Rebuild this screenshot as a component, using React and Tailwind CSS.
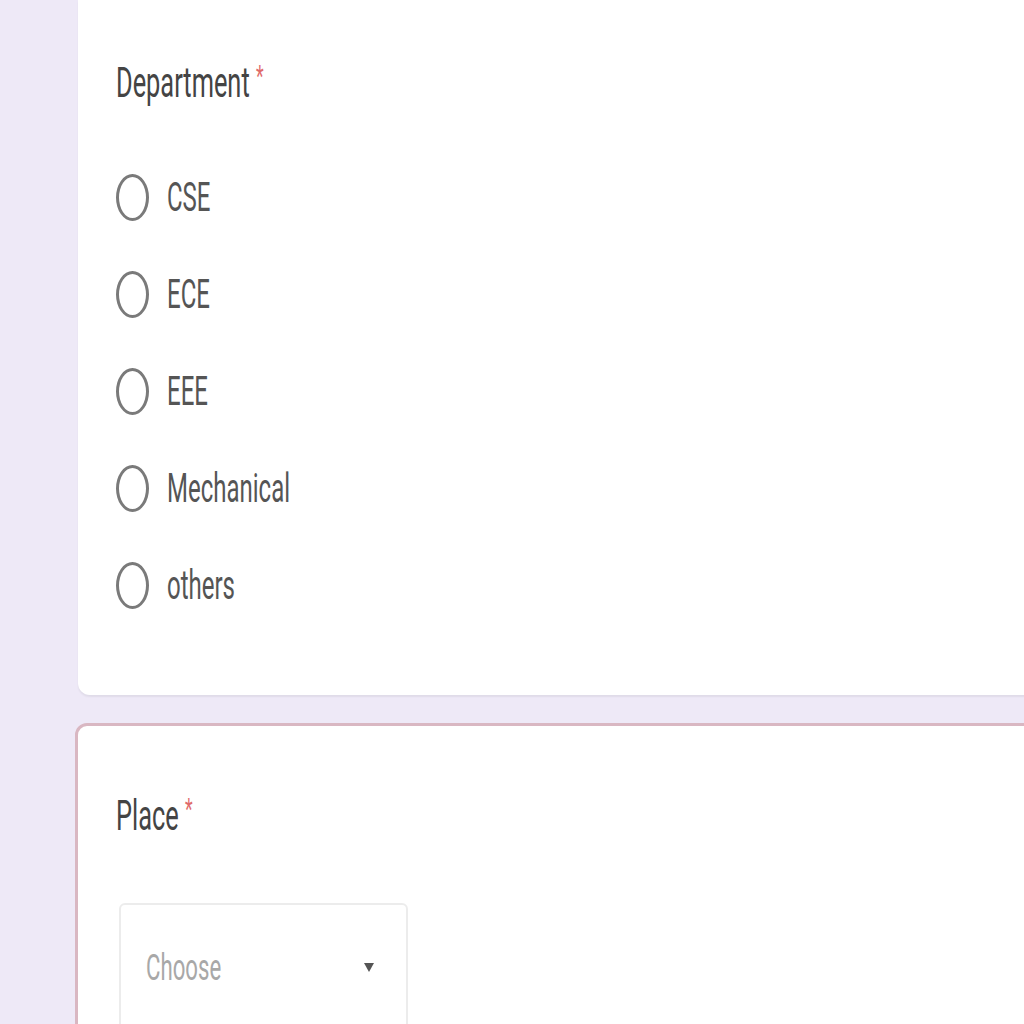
import React from "react";

const options = ["CSE", "ECE", "EEE", "Mechanical", "others"];

function Radio() {
  return <div className="w-[33px] h-[47px] rounded-[50%] border-[3px] border-[#7a7a7a] shrink-0" />;
}

export default function App() {
  return (
    <div
      className="w-[1024px] h-[1024px] overflow-hidden bg-[#eee9f7] flex flex-col"
      style={{ fontFamily: "Roboto, 'Liberation Sans', sans-serif" }}
    >
      <div className="ml-[78px] w-[960px] h-[695px] bg-white rounded-bl-[12px] shadow-[0_2px_2px_rgba(0,0,0,0.06)] pl-[38px] pt-[61px] flex flex-col shrink-0">
        <div className="h-[43px] text-[43px] leading-none text-[#444] whitespace-nowrap">
          <span className="inline-block origin-left scale-x-[0.59]">
            Department <span className="text-[30px] align-top text-[#e06a6a]">*</span>
          </span>
        </div>
        <div className="mt-[45px] flex flex-col">
          {options.map((o) => (
            <div key={o} className="h-[97px] flex items-center">
              <Radio />
              <span className="ml-[18px] text-[40px] leading-none text-[#555] whitespace-nowrap inline-block origin-left scale-x-[0.6]">
                {o}
              </span>
            </div>
          ))}
        </div>
      </div>
      <div className="mt-[28px] ml-[75px] w-[980px] h-[400px] bg-white rounded-tl-[12px] border-[3px] border-[#d9b7c2] pl-[38px] pt-[68px] flex flex-col shrink-0">
        <div className="h-[43px] text-[43px] leading-none text-[#444] whitespace-nowrap">
          <span className="inline-block origin-left scale-x-[0.59]">
            Place <span className="text-[30px] align-top text-[#e06a6a]">*</span>
          </span>
        </div>
        <div className="mt-[66px] ml-[3px] w-[289px] h-[200px] border-2 border-[#ececec] rounded-[6px] relative">
          <div className="absolute left-[25px] top-[44px] h-[36px] flex items-center text-[37px] leading-none text-[#a8a8a8] whitespace-nowrap">
            <span className="inline-block origin-left scale-x-[0.6]">Choose</span>
          </div>
          <svg className="absolute left-[242px] top-[56px]" width="12" height="12" viewBox="0 0 12 12">
            <path d="M1 2 L11 2 L6 11 Z" fill="#555" />
          </svg>
        </div>
      </div>
    </div>
  );
}
